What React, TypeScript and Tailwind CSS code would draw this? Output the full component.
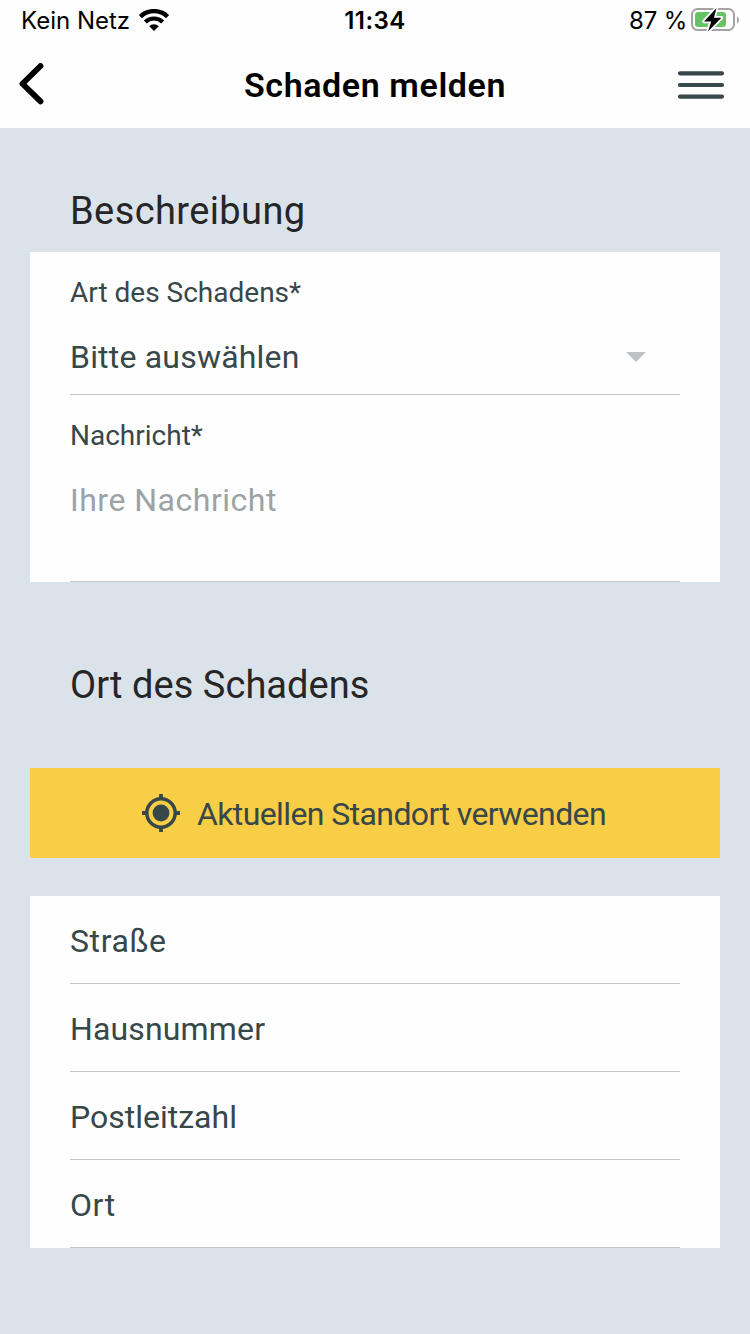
const addressFields = [
  { id: "street", label: "Straße", tracking: "tracking-[0.6px]" },
  { id: "number", label: "Hausnummer", tracking: "tracking-[0.15px]" },
  { id: "zip", label: "Postleitzahl", tracking: "tracking-normal" },
  { id: "city", label: "Ort", tracking: "tracking-[0.6px]" },
];

const WifiIcon = () => (
  <svg width="30" height="22" viewBox="0 0 30 22" fill="none" stroke="#000">
    <path d="M1.4 7.6A19.5 19.5 0 0 1 28.6 7.6" strokeWidth="4.4" />
    <path d="M6.3 13A12.6 12.6 0 0 1 23.7 13" strokeWidth="4.2" />
    <path d="M10.2 17.2A6.8 6.8 0 0 1 19.8 17.2L15 22Z" fill="#000" stroke="none" />
  </svg>
);

const BatteryIcon = () => (
  <svg width="48" height="24" viewBox="0 0 48 24" fill="none">
    <rect x="1" y="1" width="42" height="21" rx="5.5" stroke="#a3a3a3" strokeWidth="2" />
    <path d="M46 8.5C48.6 9.5 48.6 14.5 46 15.5Z" fill="#a3a3a3" />
    <rect x="4" y="4" width="31" height="15" rx="3" fill="#65c466" />
    <path
      d="M25.5 0L13 13.4H20.2L17 23.6L30.4 9.8H23Z"
      fill="#000"
      stroke="#fff"
      strokeWidth="3.6"
      strokeLinejoin="round"
      paintOrder="stroke"
    />
  </svg>
);

const LocationIcon = () => (
  <svg width="38" height="38" viewBox="0 0 38 38" fill="none" stroke="#37474a">
    <circle cx="19" cy="19" r="14.2" strokeWidth="3.5" />
    <circle cx="19" cy="19" r="8.4" fill="#37474a" stroke="none" />
    <path d="M19 0V4.5M19 33.5V38M0 19H4.5M33.5 19H38" strokeWidth="3.8" />
  </svg>
);

const StatusBar = () => (
  <div className="grid h-10 grid-cols-3 items-center font-['Inter',sans-serif] text-2xl text-black">
    <div className="flex items-center gap-[9px] pl-[21px]">
      <span className="pt-0.5">Kein Netz</span>
      <WifiIcon />
    </div>
    <span className="pt-0.5 text-center font-semibold tracking-[0.5px]">11:34</span>
    <div className="flex items-center justify-end gap-1 pr-[11px]">
      <span className="pt-0.5 tracking-[-0.2px]">87 %</span>
      <BatteryIcon />
    </div>
  </div>
);

const NavBar = () => (
  <div className="grid h-[88px] grid-cols-[1fr_auto_1fr] items-center">
    <button aria-label="Zurück" className="pl-[18px]">
      <svg width="26" height="42" viewBox="0 0 26 42" fill="none">
        <path
          d="M22.5 3L4.5 20.7L22.5 38.4"
          stroke="#000"
          strokeWidth="5.8"
          strokeLinecap="round"
          strokeLinejoin="round"
        />
      </svg>
    </button>
    <h1 className="pt-0.5 text-[34px] leading-10 font-semibold tracking-[0.6px] text-black">
      Schaden melden
    </h1>
    <button aria-label="Menü" className="flex justify-end pr-[25px]">
      <svg width="48" height="30" viewBox="0 0 48 30">
        <path
          d="M3 4.3H45M3 16H45M3 27.6H45"
          stroke="#37474a"
          strokeWidth="4.2"
          strokeLinecap="round"
        />
      </svg>
    </button>
  </div>
);

const App = () => {
  return (
    <div className="min-h-screen bg-[#dbe3ea] font-['Roboto',sans-serif] text-[#37474a]">
      <header className="bg-[#fefefe]">
        <StatusBar />
        <NavBar />
      </header>

      <main className="px-[30px]">
        <h2 className="px-10 pt-[63px] text-[38px] leading-10 tracking-[0.4px] text-[#262626]">
          Beschreibung
        </h2>
        <section className="mt-[21px] bg-[#fefefe] px-10">
          <div className="border-b border-[#c4c6c7] pt-[21px] pb-[17px]">
            <div className="text-[28px] leading-10">Art des Schadens*</div>
            <div className="mt-6 flex items-center justify-between pr-[34px]">
              <span className="text-[32px] leading-10 tracking-[0.2px]">Bitte auswählen</span>
              <svg width="20" height="10" viewBox="0 0 20 10">
                <path d="M0 0H20L10 10Z" fill="#bdc2c5" />
              </svg>
            </div>
          </div>
          <div className="border-b border-[#c4c6c7] pt-[21px] pb-[61px]">
            <div className="text-[28px] leading-10">Nachricht*</div>
            <div className="mt-6 text-[32px] leading-10 tracking-[0.5px] text-[#9ba3a5]">
              Ihre Nachricht
            </div>
          </div>
        </section>

        <h2 className="mt-[83px] px-10 text-[38px] leading-10 tracking-[0.05px] text-[#262626]">
          Ort des Schadens
        </h2>
        <button className="mt-[63px] flex h-[90px] w-full items-center justify-center gap-[17px] bg-[#f7ce46] pr-0.5">
          <LocationIcon />
          <span className="pt-0.5 text-[32px] leading-10 tracking-[-0.6px]">
            Aktuellen Standort verwenden
          </span>
        </button>

        <section className="mt-[38px] bg-[#fefefe] px-10">
          {addressFields.map(field => (
            <div
              key={field.id}
              className="flex h-[88px] items-center border-b border-[#c4c6c7] pt-0.5 text-[32px]"
            >
              <span className={field.tracking}>{field.label}</span>
            </div>
          ))}
        </section>
      </main>
    </div>
  );
};

export default App;
